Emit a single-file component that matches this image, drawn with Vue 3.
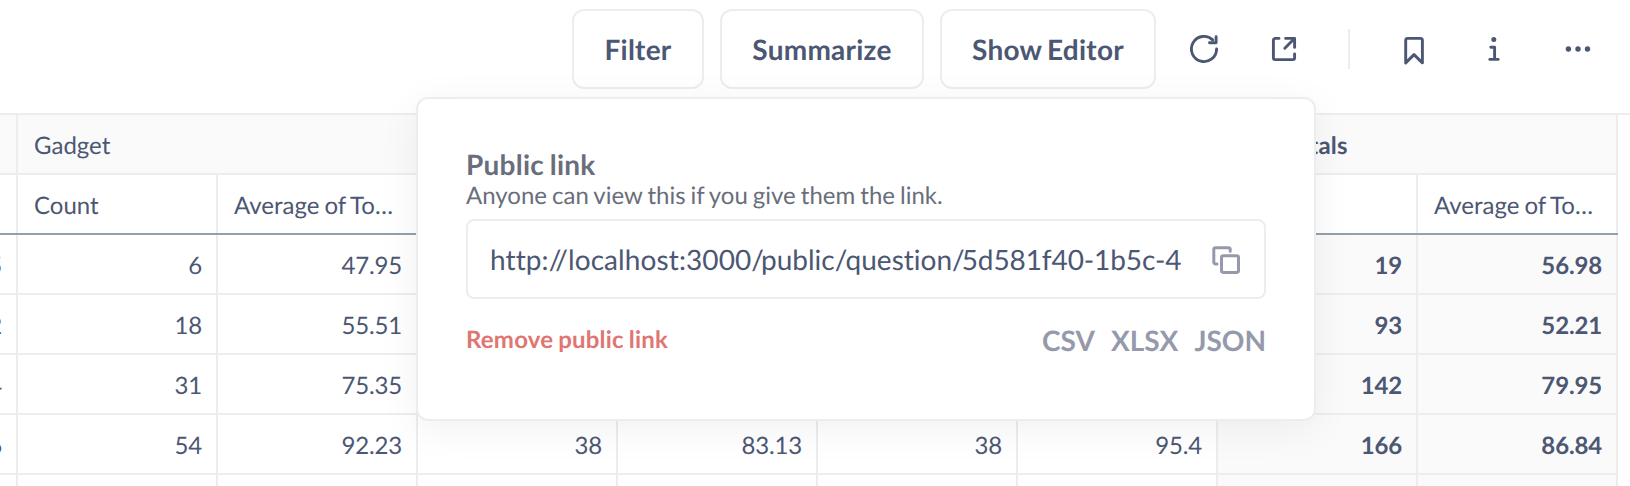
<script setup>
const actions = [
  { label: 'Filter', kind: 'filter' },
  { label: 'Summarize', kind: 'summarize' },
  { label: 'Show Editor', kind: 'editor' }
]
const groups = [
  { label: 'Gadget' },
  { label: '' },
  { label: '' },
  { label: 'Row totals', total: true }
]
const headers = ['Count', 'Average of To…', '', '', '', '', '', 'Average of To…']
const rows = [
  { lead: '5', cells: ['6', '47.95', '', '', '', '', '19', '56.98'] },
  { lead: '2', cells: ['18', '55.51', '', '', '', '', '93', '52.21'] },
  { lead: '4', cells: ['31', '75.35', '', '', '', '', '142', '79.95'] },
  { lead: '6', cells: ['54', '92.23', '38', '83.13', '38', '95.4', '166', '86.84'] },
  { lead: '', cells: ['', '', '', '', '', '', '', ''] }
]
const formats = ['CSV', 'XLSX', 'JSON']
</script>

<template>
  <div class="page">
    <header class="toolbar">
      <button v-for="a in actions" :key="a.kind" class="action" :class="a.kind">{{ a.label }}</button>
      <div class="icons">
        <svg class="icon refresh" viewBox="0 0 32 32">
          <path d="M28.6 16a12.6 12.6 0 1 1-3.9-9.1" />
          <path d="M28.1 3.7v6.1h-6.6" />
        </svg>
        <svg class="icon external" viewBox="0 0 32 32">
          <path d="M11 5.4H7.2a1.8 1.8 0 0 0-1.8 1.8v17.6a1.8 1.8 0 0 0 1.8 1.8h17.6a1.8 1.8 0 0 0 1.8-1.8V21" />
          <path d="M17.6 5.4h9v9M26.2 5.8L16.8 15.2" />
        </svg>
        <span class="divider"></span>
        <svg class="icon bookmark" viewBox="0 0 32 32">
          <path d="M7.7 29.9V7.4a2 2 0 0 1 2-2h12.7a2 2 0 0 1 2 2v22.5L16 21.6z" />
        </svg>
        <svg class="icon info" viewBox="0 0 32 32">
          <circle cx="15.8" cy="6.4" r="2.5" />
          <path d="M12.8 14.2h3.8v12.2M11.8 26.4h8.4" />
        </svg>
        <svg class="icon dots" viewBox="0 0 32 32">
          <circle cx="6.4" cy="16" r="2.7" />
          <circle cx="16" cy="16" r="2.7" />
          <circle cx="25.5" cy="16" r="2.7" />
        </svg>
      </div>
    </header>

    <main class="table">
      <div class="row group-row">
        <div class="cell lead"></div>
        <div v-for="(g, i) in groups" :key="i" class="cell group" :class="{ bold: g.total }">{{ g.label }}</div>
      </div>
      <div class="row header-row">
        <div class="cell lead"></div>
        <div v-for="(h, i) in headers" :key="i" class="cell head">{{ h }}</div>
      </div>
      <div v-for="(r, n) in rows" :key="n" class="row">
        <div class="cell lead num">{{ r.lead }}</div>
        <div v-for="(c, i) in r.cells" :key="i" class="cell num" :class="{ total: i > 5 }">{{ c }}</div>
      </div>
    </main>

    <section class="popover">
      <h2 class="title">Public link</h2>
      <p class="hint">Anyone can view this if you give them the link.</p>
      <div class="field">
        <span class="url"><span class="host">http://localhost:3000</span><span class="slash wide">/</span>public<span class="slash">/</span>question<span class="slash wide">/</span><span class="uuid">5d581f40-1b5c-4</span></span>
        <svg class="copy" viewBox="0 0 32 32">
          <path d="M20.2 8.2V6.6a1.8 1.8 0 0 0-1.8-1.8H5.6a1.8 1.8 0 0 0-1.8 1.8v12.6A1.8 1.8 0 0 0 5.6 21H7" />
          <rect x="11.5" y="12.8" width="17" height="16.6" rx="1.8" />
        </svg>
      </div>
      <footer class="foot">
        <span class="remove">Remove public link</span>
        <div class="formats">
          <span v-for="f in formats" :key="f">{{ f }}</span>
        </div>
      </footer>
    </section>
  </div>
</template>

<style>
body { background: #fff; }
</style>

<style scoped>
* { box-sizing: border-box; }
.page {
  position: relative;
  width: 1630px;
  height: 486px;
  overflow: hidden;
  background: #fff;
  color: #4c5773;
  font-family: Lato, "Open Sans", sans-serif;
  font-variant-ligatures: none;
  text-rendering: geometricPrecision;
  word-spacing: -1.1px;
}
.toolbar {
  height: 113px;
  padding: 9px 0 0 572px;
  display: flex;
  align-items: flex-start;
  gap: 16px;
}
.action {
  height: 80px;
  padding: 0;
  flex: none;
  border: 2px solid #ededed;
  border-radius: 12px;
  background: #fff;
  color: #4c5773;
  font: 700 28px/76px Lato, sans-serif;
  text-rendering: inherit;
  letter-spacing: 0.25px;
  word-spacing: -1.8px;
  white-space: nowrap;
}
.filter { width: 132px; }
.summarize { width: 204px; }
.editor { width: 216px; }
.icons {
  height: 80px;
  flex: 1;
  display: flex;
  align-items: center;
}
.icon {
  width: 32px;
  height: 32px;
  flex: none;
  fill: none;
  stroke: #4c5773;
  stroke-width: 2.9;
  stroke-linecap: round;
  stroke-linejoin: round;
}
.icon circle { fill: #4c5773; stroke: none; }
.refresh { margin-left: 16px; }
.external { margin-left: 48px; }
.divider {
  width: 2px;
  height: 40px;
  margin: 0 48px;
  background: #ededed;
}
.info { margin-left: 48px; }
.dots { margin-left: 52px; }
.table { border-top: 2px solid #ededed; }
.row {
  display: grid;
  grid-template-columns: 18px repeat(8, 200px);
  width: 1618px;
  height: 60px;
}
.group-row { grid-template-columns: 18px repeat(4, 400px); }
.cell {
  border-right: 2px solid #eeecec;
  border-bottom: 2px solid #eeecec;
  font-size: 24px;
  line-height: 62px;
  height: 60px;
  white-space: nowrap;
  padding: 0 14px 0 16px;
}
.group-row .cell { background: #fafafa; }
.header-row .cell { border-right-width: 0; box-shadow: inset -2px 0 #eeecec; border-bottom-color: #93a1ab; }
.num { text-align: right; letter-spacing: -0.15px; }
.lead { display: flex; justify-content: flex-end; padding: 0 14px 0 0; }
.total { background: #fafafa; font-weight: 700; }
.bold { font-weight: 700; letter-spacing: 0.2px; }
.popover {
  position: absolute;
  left: 416px;
  top: 97px;
  width: 900px;
  height: 324px;
  padding: 48px;
  border: 2px solid #ededed;
  border-radius: 12px;
  background: #fff;
  box-shadow: 0 8px 40px rgba(0, 0, 0, 0.06);
}
.title {
  margin: 0;
  color: #696e7b;
  font-size: 28px;
  line-height: 34px;
  font-weight: 700;
  letter-spacing: 0.25px;
  word-spacing: -1.4px;
}
.hint {
  margin: 0;
  color: #696e7b;
  font-size: 24px;
  line-height: 29px;
  white-space: nowrap;
}
.field {
  height: 80px;
  margin-top: 9px;
  padding: 0 22px;
  display: flex;
  align-items: center;
  justify-content: space-between;
  border: 2px solid #ededed;
  border-radius: 8px;
}
.url { font-size: 28px; line-height: 40px; white-space: nowrap; }
.host { letter-spacing: 0.1px; }
.slash { letter-spacing: -1.8px; }
.wide { letter-spacing: -3px; }
.uuid { letter-spacing: -0.1px; }
.copy {
  width: 32px;
  height: 32px;
  flex: none;
  fill: none;
  stroke: #949aab;
  stroke-width: 3;
  stroke-linecap: round;
}
.foot {
  margin-top: 24px;
  display: flex;
  align-items: center;
  justify-content: space-between;
  height: 34px;
}
.remove {
  color: #e07572;
  font-size: 24px;
  line-height: 34px;
  font-weight: 700;
  letter-spacing: 0.2px;
}
.formats {
  display: flex;
  gap: 16px;
  color: #949aab;
  font-size: 28px;
  font-weight: 700;
}
</style>
